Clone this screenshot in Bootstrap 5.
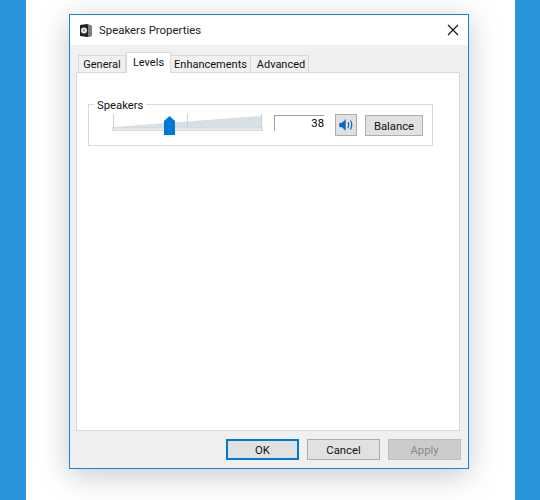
<!DOCTYPE html>
<html lang="en">
<head>
  <meta charset="UTF-8">
  <meta name="viewport" content="width=device-width, initial-scale=1">
  <title>Speakers Properties</title>
  <link href="https://cdn.jsdelivr.net/npm/bootstrap@5.3.0/dist/css/bootstrap.min.css" rel="stylesheet">
  <style>
    html, body { height: 500px; overflow: hidden; }
    body { background: #fff; font-family: Roboto, "Noto Sans", sans-serif; font-size: 11.3px; color: #000; line-height: 16px; }
    .side-bar { background: #2a95db; }
    .side-left { width: 26px; }
    .side-right { width: 25px; }
    .desk { padding: 14px 0 0 43px; }
    .dlg { width: 400px; height: 455px; background: #f0f0f0; border: 1px solid #1883d7; box-shadow: 0 6px 28px rgba(0,0,0,.22); }
    .dlg-title { height: 30px; background: #fff; padding: 0 8px 0 9px; font-size: 11.4px; color: #222; }
    .dlg-name { margin-left: 6px; }
    .dlg-close { width: 12px; height: 12px; margin-right: 1px; }
    .dlg-tabs { padding: 7px 6px 0 8px; height: 27px; border: 0; flex-wrap: nowrap; }
    .dlg-tab { height: 17px; margin-top: 3px; background: #f0f0f0; border: 1px solid #d9d9d9; border-bottom: 0; border-left-width: 0; color: #111; font-size: 11px; line-height: 17px; white-space: nowrap; text-align: center; }
    .dlg-tab:first-child { border-left-width: 1px; }
    .tab-general { width: 48px; }
    .tab-levels { width: 45px; }
    .tab-enh { width: 80px; }
    .tab-adv { width: 58px; padding-left: 3px; }
    .dlg-tab.on { height: 21px; margin-top: 0; background: #fff; border-left-width: 1px; line-height: 19px; position: relative; margin-bottom: -1px; z-index: 1; }
    .dlg-panel { width: 384px; height: 359px; margin-left: 6px; background: #fff; border: 1px solid #d9d9d9; padding: 31px 26px 0 11px; }
    .grp { height: 42px; border: 1px solid #d9d9d9; position: relative; padding: 9px 9px 0 23px; }
    .grp-title { position: absolute; left: 5px; top: -7px; background: #fff; padding: 0 3px; color: #111; }
    .lvl-input { width: 50px; height: 16px; margin-left: 11px; margin-top: 1px; border-top: 1px solid #a0a0a0; border-left: 1px solid #a0a0a0; text-align: right; line-height: 15px; }
    .win-btn { background: #e1e1e1; border: 1px solid #adadad; border-radius: 0; padding: 2px 0 0; font-size: 11.3px; color: #111; line-height: 1; }
    .btn-mute { width: 22px; height: 22px; margin-left: 11px; padding: 0; }
    .btn-bal { width: 58px; height: 21px; margin-left: 8px; margin-top: 1px; }
    .dlg-foot { padding: 8px 7px 0 0; gap: 8px; }
    .dlg-foot .win-btn { width: 73px; height: 21px; }
    .dlg-foot .win-btn.def { border: 2px solid #0078d7; }
    .dlg-foot .win-btn.off { background: #ccc; border-color: #bfbfbf; color: #8a8a8a; opacity: 1; }
  </style>
</head>
<body class="d-flex">
<div class="side-bar side-left flex-shrink-0"></div>
<div class="desk flex-grow-1">
  <div class="dlg">
    <div class="dlg-title d-flex align-items-center">
      <svg width="14" height="15" viewBox="0 0 14 15" class="flex-shrink-0">
        <path d="M1 2 L8 1 L13 3 L13 13 L8 14 L1 13 Z" fill="#222"/>
        <path d="M9 1.2 L13 3 L13 13 L9 13.8 Z" fill="#7d7d7d"/>
        <circle cx="5" cy="7.5" r="3" fill="#e8e8e8"/>
        <circle cx="5" cy="7.5" r="1.2" fill="#999"/>
      </svg>
      <span class="flex-grow-1 dlg-name">Speakers Properties</span>
      <svg class="dlg-close" viewBox="0 0 12 12"><path d="M1 1 L11 11 M11 1 L1 11" stroke="#111" stroke-width="1.1" fill="none"/></svg>
    </div>
    <div class="nav dlg-tabs">
      <div class="dlg-tab tab-general">General</div>
      <div class="dlg-tab tab-levels on">Levels</div>
      <div class="dlg-tab tab-enh">Enhancements</div>
      <div class="dlg-tab tab-adv">Advanced</div>
    </div>
    <div class="dlg-panel">
      <div class="grp d-flex align-items-start">
        <span class="grp-title">Speakers</span>
        <svg width="151" height="22" viewBox="0 0 151 22" class="flex-shrink-0">
          <path d="M1.5 13 L149 2 L149 13 Z" fill="#d6e0e6"/>
          <path d="M1.5 0 V13 M75.5 0 V13 M149.5 0 V13" stroke="#d0d0d0" fill="none"/>
          <rect x="0.5" y="13.5" width="150" height="3" fill="#e8e8e8" stroke="#dadada"/>
          <path d="M52 7 L57.5 2 L63 7 V21 H52 Z" fill="#0078d7"/>
        </svg>
        <div class="lvl-input">38</div>
        <button class="win-btn btn-mute d-flex align-items-center justify-content-center" type="button">
          <svg width="16" height="16" viewBox="0 0 16 16">
            <path d="M1 5.5 H4 L8 1.5 V14.5 L4 10.5 H1 Z" fill="#0a67c4" stroke="#f4f8fc" stroke-width=".5"/>
            <path d="M10 5 Q11.6 8 10 11 M12.5 3.5 Q15 8 12.5 12.5" stroke="#0a67c4" stroke-width="1.2" fill="none"/>
          </svg>
        </button>
        <button class="win-btn btn-bal" type="button">Balance</button>
      </div>
    </div>
    <div class="dlg-foot d-flex justify-content-end">
      <button class="win-btn def" type="button">OK</button>
      <button class="win-btn" type="button">Cancel</button>
      <button class="win-btn off" type="button" disabled>Apply</button>
    </div>
  </div>
</div>
<div class="side-bar side-right flex-shrink-0"></div>
<script src="https://cdn.jsdelivr.net/npm/bootstrap@5.3.0/dist/js/bootstrap.bundle.min.js"></script>
</body>
</html>
